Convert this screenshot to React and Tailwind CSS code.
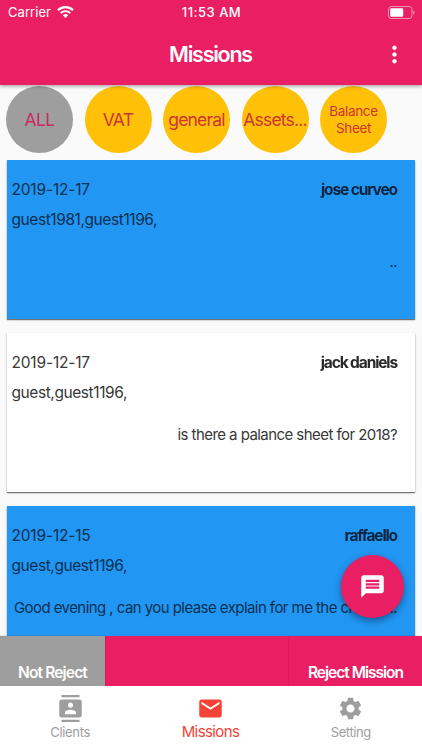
import React from "react";
import { MdMoreVert, MdContacts, MdEmail, MdSettings, MdMessage } from "react-icons/md";

const categories = [
  { label: "ALL", circle: "bg-[#9e9e9e]", text: "text-[17.5px] tracking-[-0.6px] text-[#c92a62]" },
  { label: "VAT", circle: "bg-[#ffc107]", text: "text-[17.5px] tracking-[-0.7px] text-[#cf3433]" },
  { label: "general", circle: "bg-[#ffc107]", text: "text-[17.5px] tracking-[-0.8px] text-[#cf3433]" },
  { label: "Assets...", circle: "bg-[#ffc107]", text: "text-[17.5px] tracking-[-0.8px] text-[#cf3433]" },
  { label: "Balance Sheet", circle: "bg-[#ffc107]", text: "text-[13.5px] leading-[17px] tracking-[-0.35px] text-[#cf3433]" },
];

const missions = [
  { date: "2019-12-17", name: "jose curveo", guests: "guest1981,guest1196,", message: "..", tone: "bg-[#2196f3] text-[#0a3052]" },
  { date: "2019-12-17", name: "jack daniels", guests: "guest,guest1196,", message: "is there a palance sheet for 2018?", tone: "bg-white text-[#383838]" },
  { date: "2019-12-15", name: "raffaello", guests: "guest,guest1196,", message: "Good evening , can you please explain for me the charg.....", tone: "bg-[#2196f3] text-[#0a3052]" },
];

function StatusBar() {
  return (
    <div className="grid h-6 grid-cols-3 items-center pl-2 pr-[7px] text-[13px] leading-none">
      <div className="flex items-center gap-[6px]">
        <span className="tracking-[0.05px]">Carrier</span>
        <svg width="17" height="12" viewBox="0 0 17 12" fill="none" stroke="white">
          <path d="M1 4.2C5.2 .2 11.8 .2 16 4.2" strokeWidth="2.2" />
          <path d="M3.7 7C6.5 4.5 10.5 4.5 13.3 7" strokeWidth="2" />
          <path d="M5.8 9.2C7.5 7.7 9.5 7.7 11.2 9.2L8.5 12Z" fill="white" stroke="none" />
        </svg>
      </div>
      <span className="text-center font-medium tracking-[0.5px]">11:53 AM</span>
      <svg className="justify-self-end" width="27" height="13" viewBox="0 0 27 13" fill="none">
        <rect x=".5" y=".5" width="23.5" height="12" rx="3" stroke="white" strokeOpacity=".5" />
        <rect x="2.2" y="2.2" width="13" height="8.6" rx="1.3" fill="white" />
        <path d="M25.3 4.5v4c1.6-.7 1.6-3.3 0-4" fill="white" fillOpacity=".55" />
      </svg>
    </div>
  );
}

function MissionCard({ mission }) {
  return (
    <article className={`h-[158.5px] shrink-0 pl-[4.5px] pr-[18px] pt-[19.5px] text-[15.5px] leading-5 shadow-[0_1px_1px_rgba(0,0,0,0.5),0_1px_3px_rgba(0,0,0,0.12)] ${mission.tone}`}>
      <div className="flex justify-between">
        <span className="tracking-[-0.18px]">{mission.date}</span>
        <span className="font-bold tracking-[-1.12px] brightness-75">{mission.name}</span>
      </div>
      <div className="mt-[10px] tracking-[-0.42px]">{mission.guests}</div>
      <div className="mt-[22px] whitespace-nowrap text-right text-[15px] tracking-[-0.56px]">{mission.message}</div>
    </article>
  );
}

function Tab({ icon, label, className }) {
  return (
    <div className={`flex flex-col items-center ${className}`}>
      {icon}
      <span>{label}</span>
    </div>
  );
}

export default function App() {
  return (
    <div className="relative flex h-[750px] w-[422px] flex-col overflow-hidden bg-[#fafafa] font-['Inter','Liberation_Sans',sans-serif]">
      <header className="z-10 h-[85px] shrink-0 bg-[#e91e63] text-white shadow-[0_1px_4px_rgba(0,0,0,0.4)]">
        <StatusBar />
        <div className="grid h-[61px] grid-cols-[54px_1fr_55px] items-center">
          <span />
          <h1 className="text-center text-[21.5px] font-semibold tracking-[-1.25px]">Missions</h1>
          <MdMoreVert size={27} className="justify-self-center" />
        </div>
      </header>

      <div className="flex h-[75px] shrink-0 gap-[11.5px] pl-[6px] pt-[1px]">
        {categories.map((c) => (
          <div key={c.label} className={`flex size-[67px] shrink-0 items-center justify-center rounded-full pt-px text-center ${c.circle}`}>
            <span className={c.text}>{c.label}</span>
          </div>
        ))}
      </div>

      <main className="flex h-[476px] shrink-0 flex-col gap-[14.5px] overflow-hidden pl-[7px] pr-[7px]">
        {missions.map((m) => (
          <MissionCard key={m.name} mission={m} />
        ))}
      </main>

      <div className="flex h-[50px] shrink-0 justify-between bg-[#e91e63] text-[15.5px] font-semibold leading-5 text-white">
        <button className="w-[105px] bg-[#9e9e9e] pt-[23px] tracking-[-0.85px] shadow-[0_0_1px_rgba(0,0,0,0.5)]">Not Reject</button>
        <button className="w-[133px] pt-[23px] tracking-[-1px] shadow-[0_0_1px_rgba(0,0,0,0.3)]">Reject Mission</button>
      </div>

      <nav className="z-10 grid h-16 shrink-0 grid-cols-3 bg-white pr-px pt-[9px]">
        <Tab icon={<MdContacts size={27} />} label="Clients" className="text-[13px] leading-[21px] tracking-[-0.35px] text-[#9e9e9e]" />
        <Tab icon={<MdEmail size={27} />} label="Missions" className="text-[15px] leading-5 tracking-[-0.6px] text-[#f44336]" />
        <Tab icon={<MdSettings size={27} />} label="Setting" className="text-[13px] leading-[21px] tracking-[-0.4px] text-[#9e9e9e]" />
      </nav>

      <button className="absolute left-[340.5px] top-[555px] flex size-[63px] items-center justify-center rounded-full bg-[#e91e63] text-white shadow-[0_3px_7px_rgba(0,0,0,0.4)]">
        <MdMessage size={27} />
      </button>
    </div>
  );
}
